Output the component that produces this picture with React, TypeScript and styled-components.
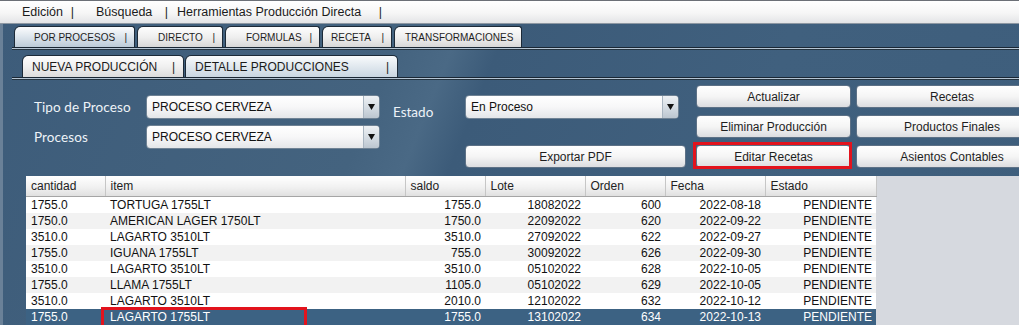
import styled, { createGlobalStyle } from 'styled-components';

const GlobalStyle = createGlobalStyle`
  html, body {
    margin: 0;
    padding: 0;
    background: #40607e;
  }
  body {
    font-family: 'Liberation Sans', Arial, sans-serif;
  }
`;

type Align = 'left' | 'right';

const menuItems = [
  { label: 'Edición', width: 52, gap: 22 },
  { label: 'Búsqueda', width: 72, gap: 9 },
  { label: 'Herramientas Producción Directa', width: 205, gap: 0 },
];

const outerTabs = [
  { label: 'POR PROCESOS', width: 121, pad: 19, sep: true, active: true },
  { label: 'DIRECTO', width: 86, pad: 20, sep: true, active: false },
  { label: 'FORMULAS', width: 95, pad: 20, sep: true, active: false },
  { label: 'RECETA', width: 70, pad: 8, sep: true, active: false },
  { label: 'TRANSFORMACIONES', width: 128, pad: 10, sep: false, active: false },
];

const innerTabs = [
  { label: 'NUEVA PRODUCCIÓN', width: 162, active: false },
  { label: 'DETALLE PRODUCCIONES', width: 213, active: true },
];

const columns: { title: string; width: number; align: Align }[] = [
  { title: 'cantidad', width: 79, align: 'left' },
  { title: 'item', width: 300, align: 'left' },
  { title: 'saldo', width: 80, align: 'right' },
  { title: 'Lote', width: 100, align: 'right' },
  { title: 'Orden', width: 80, align: 'right' },
  { title: 'Fecha', width: 100, align: 'right' },
  { title: 'Estado', width: 111, align: 'right' },
];

const rows = [
  ['1755.0', 'TORTUGA 1755LT', '1755.0', '18082022', '600', '2022-08-18', 'PENDIENTE'],
  ['1750.0', 'AMERICAN LAGER 1750LT', '1750.0', '22092022', '620', '2022-09-22', 'PENDIENTE'],
  ['3510.0', 'LAGARTO 3510LT', '3510.0', '27092022', '622', '2022-09-27', 'PENDIENTE'],
  ['1755.0', 'IGUANA 1755LT', '755.0', '30092022', '626', '2022-09-30', 'PENDIENTE'],
  ['3510.0', 'LAGARTO 3510LT', '3510.0', '05102022', '628', '2022-10-05', 'PENDIENTE'],
  ['1755.0', 'LLAMA 1755LT', '1105.0', '05102022', '629', '2022-10-05', 'PENDIENTE'],
  ['3510.0', 'LAGARTO 3510LT', '2010.0', '12102022', '632', '2022-10-12', 'PENDIENTE'],
  ['1755.0', 'LAGARTO 1755LT', '1755.0', '13102022', '634', '2022-10-13', 'PENDIENTE'],
];

const SELECTED_ROW = 7;

const ComboArrowIcon = () => (
  <svg width="7" height="6" viewBox="0 0 7 6">
    <path d="M0 0 H7 L3.5 6 Z" fill="#111" />
  </svg>
);

const Combo = ({ value, width }: { value: string; width: number }) => (
  <S.Combo $width={width}>
    <S.ComboValue>{value}</S.ComboValue>
    <S.ComboArrow>
      <ComboArrowIcon />
    </S.ComboArrow>
  </S.Combo>
);

const App = () => {
  return (
    <>
      <GlobalStyle />
      <S.Window>
        <S.MenuBar>
          {menuItems.map((item) => (
            <S.MenuItem key={item.label} $width={item.width} $gap={item.gap}>
              <span>{item.label}</span>
              <span>|</span>
            </S.MenuItem>
          ))}
        </S.MenuBar>

        <S.Body>
          <S.OuterTabRow>
            {outerTabs.map((tab) => (
              <S.OuterTab key={tab.label} $width={tab.width} $pad={tab.pad} $active={tab.active}>
                <span>{tab.label}</span>
                {tab.sep && <span>|</span>}
              </S.OuterTab>
            ))}
          </S.OuterTabRow>

          <S.Panel>
            <S.InnerTabRow>
              {innerTabs.map((tab) => (
                <S.InnerTab key={tab.label} $width={tab.width} $active={tab.active}>
                  <span>{tab.label}</span>
                  <span>|</span>
                </S.InnerTab>
              ))}
            </S.InnerTabRow>

            <S.InnerPanel>
              <S.Form>
                <S.FieldGrid>
                  <S.FieldLabel>Tipo de Proceso</S.FieldLabel>
                  <Combo value="PROCESO CERVEZA" width={234} />
                  <S.FieldLabel>Procesos</S.FieldLabel>
                  <Combo value="PROCESO CERVEZA" width={234} />
                </S.FieldGrid>

                <S.EstadoLabel>Estado</S.EstadoLabel>

                <S.MiddleColumn>
                  <Combo value="En Proceso" width={214} />
                  <S.ExportButton>Exportar PDF</S.ExportButton>
                </S.MiddleColumn>

                <S.ButtonGrid>
                  <S.ActionButton>Actualizar</S.ActionButton>
                  <S.ActionButton>Recetas</S.ActionButton>
                  <S.ActionButton>Eliminar Producción</S.ActionButton>
                  <S.ActionButton>Productos Finales</S.ActionButton>
                  <S.ActionButton $highlight>Editar Recetas</S.ActionButton>
                  <S.ActionButton>Asientos Contables</S.ActionButton>
                </S.ButtonGrid>
              </S.Form>

              <S.TableArea>
                <S.Table>
                  <colgroup>
                    {columns.map((col) => (
                      <col key={col.title} style={{ width: col.width }} />
                    ))}
                  </colgroup>
                  <thead>
                    <tr>
                      {columns.map((col) => (
                        <S.HeaderCell key={col.title}>{col.title}</S.HeaderCell>
                      ))}
                    </tr>
                  </thead>
                  <tbody>
                    {rows.map((row, i) => (
                      <S.Row key={i} $stripe={i % 2 === 1} $selected={i === SELECTED_ROW}>
                        {row.map((value, c) => (
                          <S.Cell key={c} $align={columns[c].align}>
                            {value}
                            {i === SELECTED_ROW && c === 1 && <S.Marker />}
                          </S.Cell>
                        ))}
                      </S.Row>
                    ))}
                  </tbody>
                </S.Table>
              </S.TableArea>
            </S.InnerPanel>
          </S.Panel>
        </S.Body>
      </S.Window>
    </>
  );
};

export default App;

const panelLines = `
  border-top: 1px solid #1a2734;
  box-shadow: inset 0 1px 0 #b4c4d3, inset 0 2px 0 #24333f;
`;

const buttonLook = `
  margin: 0;
  padding: 0;
  box-sizing: border-box;
  border: 1px solid #5d7186;
  border-radius: 4px;
  background: linear-gradient(#ffffff, #f5f5f5 50%, #dcdde0);
  font-family: 'Liberation Sans', Arial, sans-serif;
  font-size: 12px;
  color: #1e1e1e;
  white-space: nowrap;
`;

const S = {
  Window: styled.div`
    width: 1019px;
    height: 325px;
    overflow: hidden;
    display: flex;
    flex-direction: column;
    border-top: 1px solid #6c7077;
    box-sizing: border-box;
    background: linear-gradient(
      112deg,
      #3d5c7a 0%,
      #44637f 36%,
      #4a6985 41%,
      #3c5b79 45%,
      #40607e 70%,
      #3e5e7c 100%
    );
  `,
  MenuBar: styled.div`
    height: 22px;
    flex-shrink: 0;
    display: flex;
    align-items: center;
    padding-left: 22px;
    background: linear-gradient(#ffffff, #f6f6f6 55%, #e3e4e6);
    border-bottom: 1px solid #8d97a2;
    font-size: 12.5px;
    color: #1b1b1b;
  `,
  MenuItem: styled.div<{ $width: number; $gap: number }>`
    width: ${({ $width }) => $width}px;
    margin-right: ${({ $gap }) => $gap}px;
    flex-shrink: 0;
    display: flex;
    justify-content: space-between;
    white-space: nowrap;
  `,
  Body: styled.div`
    flex: 1;
    display: flex;
    flex-direction: column;
    border-left: 3px solid #6a8198;
    min-height: 0;
  `,
  OuterTabRow: styled.div`
    height: 21px;
    margin-top: 2px;
    padding-left: 11px;
    display: flex;
    gap: 2px;
    flex-shrink: 0;
  `,
  OuterTab: styled.div<{ $width: number; $pad: number; $active: boolean }>`
    width: ${({ $width }) => $width}px;
    flex-shrink: 0;
    box-sizing: border-box;
    padding: 1px 7px 0 ${({ $pad }) => $pad}px;
    display: flex;
    align-items: center;
    justify-content: space-between;
    border: 1px solid #1c2a38;
    border-bottom: none;
    border-radius: 6px 3px 0 0;
    background: ${({ $active }) =>
      $active
        ? 'linear-gradient(#fbfcfd, #dfe7ee 45%, #bccbd8)'
        : 'linear-gradient(#fdfdfd, #efefef 50%, #d8d8d8)'};
    font-size: 10px;
    color: #1e1e1e;
    white-space: nowrap;
  `,
  Panel: styled.div`
    flex: 1;
    margin-left: 9px;
    padding-top: 7px;
    display: flex;
    flex-direction: column;
    min-height: 0;
    ${panelLines}
  `,
  InnerTabRow: styled.div`
    height: 22px;
    padding-left: 10px;
    display: flex;
    gap: 1px;
    flex-shrink: 0;
  `,
  InnerTab: styled.div<{ $width: number; $active: boolean }>`
    width: ${({ $width }) => $width}px;
    flex-shrink: 0;
    box-sizing: border-box;
    padding: 1px 8px 0 9px;
    display: flex;
    align-items: center;
    justify-content: space-between;
    border: 1px solid #1c2a38;
    border-bottom: none;
    border-radius: 6px 5px 0 0;
    background: ${({ $active }) =>
      $active
        ? 'linear-gradient(#f9fbfc, #e3eaf0 45%, #c9d6e1)'
        : 'linear-gradient(#fdfdfd, #f0f0f0 50%, #dcdcdc)'};
    font-size: 12px;
    color: #1a1a1a;
    white-space: nowrap;
  `,
  InnerPanel: styled.div`
    flex: 1;
    display: flex;
    flex-direction: column;
    min-height: 0;
    ${panelLines}
  `,
  Form: styled.div`
    height: 98px;
    flex-shrink: 0;
    padding-left: 22px;
    display: flex;
    align-items: flex-start;
    & > * {
      flex-shrink: 0;
    }
  `,
  FieldGrid: styled.div`
    margin-top: 17px;
    display: grid;
    grid-template-columns: 112px 234px;
    grid-auto-rows: 24px;
    row-gap: 6px;
  `,
  FieldLabel: styled.div`
    display: flex;
    align-items: center;
    font-family: Lato, 'Open Sans', sans-serif;
    font-size: 13.5px;
    color: #eef3f8;
    letter-spacing: 0.1px;
  `,
  EstadoLabel: styled.div`
    width: 85px;
    box-sizing: border-box;
    padding-left: 13px;
    margin-top: 24px;
    line-height: 20px;
    font-family: Lato, 'Open Sans', sans-serif;
    font-size: 13.5px;
    color: #eef3f8;
  `,
  MiddleColumn: styled.div`
    width: 221px;
    margin-top: 17px;
    display: flex;
    flex-direction: column;
    gap: 26px;
  `,
  Combo: styled.div<{ $width: number }>`
    width: ${({ $width }) => $width}px;
    height: 24px;
    box-sizing: border-box;
    display: flex;
    border: 1px solid #6f8294;
    border-radius: 4px;
    overflow: hidden;
    background: linear-gradient(#ffffff, #f7f7f8 50%, #e4e6e9);
  `,
  ComboValue: styled.div`
    flex: 1;
    display: flex;
    align-items: center;
    padding-left: 5px;
    font-size: 12px;
    color: #111;
    white-space: nowrap;
  `,
  ComboArrow: styled.div`
    width: 15px;
    display: flex;
    align-items: center;
    justify-content: center;
    border-left: 1px solid #a9b5c1;
    background: linear-gradient(#eef1f4, #d6dde4 50%, #bcc6d0);
  `,
  ButtonGrid: styled.div`
    margin-left: 10px;
    margin-top: 7px;
    display: grid;
    grid-template-columns: 155px 192px;
    grid-auto-rows: 23px;
    column-gap: 5px;
    row-gap: 7px;
  `,
  ActionButton: styled.button<{ $highlight?: boolean }>`
    ${buttonLook}
    position: relative;
    &::after {
      content: '';
      display: ${({ $highlight }) => ($highlight ? 'block' : 'none')};
      position: absolute;
      inset: -4px -2px -2px -4px;
      border: 3px solid #e2131d;
      pointer-events: none;
    }
  `,
  ExportButton: styled.button`
    ${buttonLook}
    width: 221px;
    height: 23px;
  `,
  TableArea: styled.div`
    flex: 1;
    margin-left: 14px;
    display: flex;
    background: #d6d9df;
    overflow: hidden;
    min-height: 0;
  `,
  Table: styled.table`
    width: 850px;
    flex-shrink: 0;
    table-layout: fixed;
    border-collapse: collapse;
    align-self: flex-start;
    font-size: 12px;
  `,
  HeaderCell: styled.th`
    height: 20px;
    padding: 0 0 0 5px;
    text-align: left;
    font-weight: normal;
    color: #222;
    background: linear-gradient(#ffffff, #f1f1f1 55%, #e0e0e0);
    border-right: 1px solid #c6c6c6;
    border-bottom: 1px solid #a5a5a5;
    white-space: nowrap;
  `,
  Row: styled.tr<{ $stripe: boolean; $selected: boolean }>`
    background: ${({ $stripe, $selected }) =>
      $selected ? '#3c6283' : $stripe ? '#f2f2f2' : '#ffffff'};
    color: ${({ $selected }) => ($selected ? '#ffffff' : '#111111')};
  `,
  Cell: styled.td<{ $align: Align }>`
    position: relative;
    height: 16px;
    padding: 0 4px 0 5px;
    line-height: 16px;
    text-align: ${({ $align }) => $align};
    white-space: nowrap;
  `,
  Marker: styled.div`
    position: absolute;
    left: -4px;
    top: -2px;
    width: 206px;
    height: 21px;
    box-sizing: border-box;
    border: 3px solid #e2131d;
    pointer-events: none;
  `,
};
